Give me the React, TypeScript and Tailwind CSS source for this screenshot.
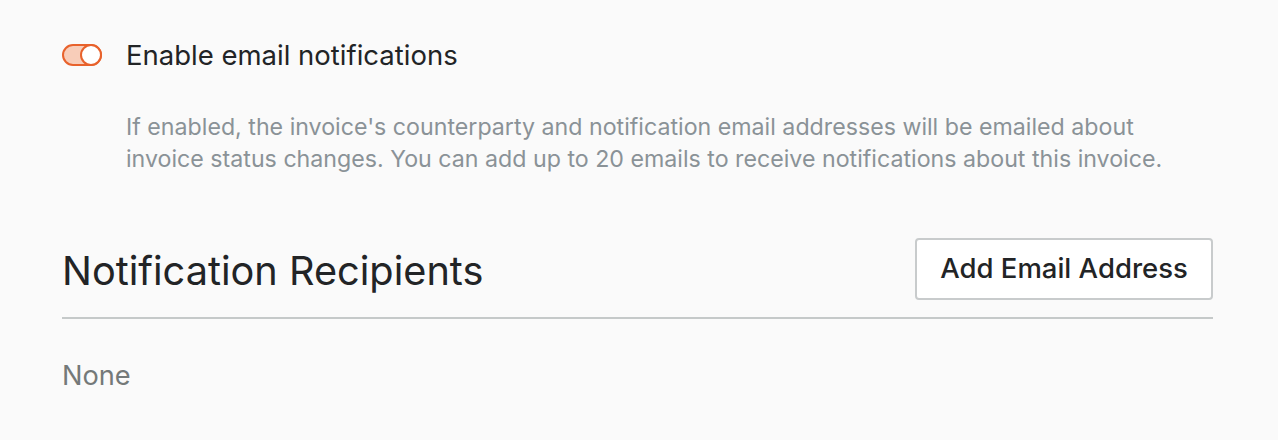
import React from 'react';

const Toggle: React.FC<{ on: boolean }> = ({ on }) => (
  <button
    type="button"
    role="switch"
    aria-checked={on}
    className={
      'relative flex h-[22px] w-[40px] shrink-0 items-center rounded-full border-2 border-[#e8622c] ' +
      (on ? 'justify-end bg-[#f8cdb9]' : 'justify-start bg-white')
    }
  >
    <span className="-mr-[2px] h-[22px] w-[22px] rounded-full border-2 border-[#e8622c] bg-white" />
  </button>
);

const App: React.FC = () => {
  return (
    <div className="min-h-[440px] w-full bg-[#fafafa] font-['Inter','Liberation_Sans',sans-serif] text-[#222426]">
      <div className="w-[1151px] pl-[62px] pt-[44px] box-content">
        <div className="flex items-center gap-[24px]">
          <Toggle on />
          <span className="text-[27.5px] leading-[22px]">Enable email notifications</span>
        </div>

        <p className="mt-[45px] pl-[64px] text-[23.2px] leading-[32px] text-[#8a9297]">
          If enabled, the invoice's counterparty and notification email addresses will be emailed about
          <br />
          invoice status changes. You can add up to 20 emails to receive notifications about this invoice.
        </p>

        <div className="mt-[63px] flex items-center justify-between border-b-2 border-[#c5c9c9] pb-[17px]">
          <h2 className="pt-[3px] text-[39.7px] leading-[48px] font-normal">Notification Recipients</h2>
          <button
            type="button"
            className="h-[62px] w-[298px] rounded-[4px] border-2 border-[#c8cbcc] bg-white text-[27.5px] font-medium"
          >
            Add Email Address
          </button>
        </div>

        <p className="mt-[41px] text-[27.2px] leading-[32px] text-[#747979]">None</p>
      </div>
    </div>
  );
};

export default App;
